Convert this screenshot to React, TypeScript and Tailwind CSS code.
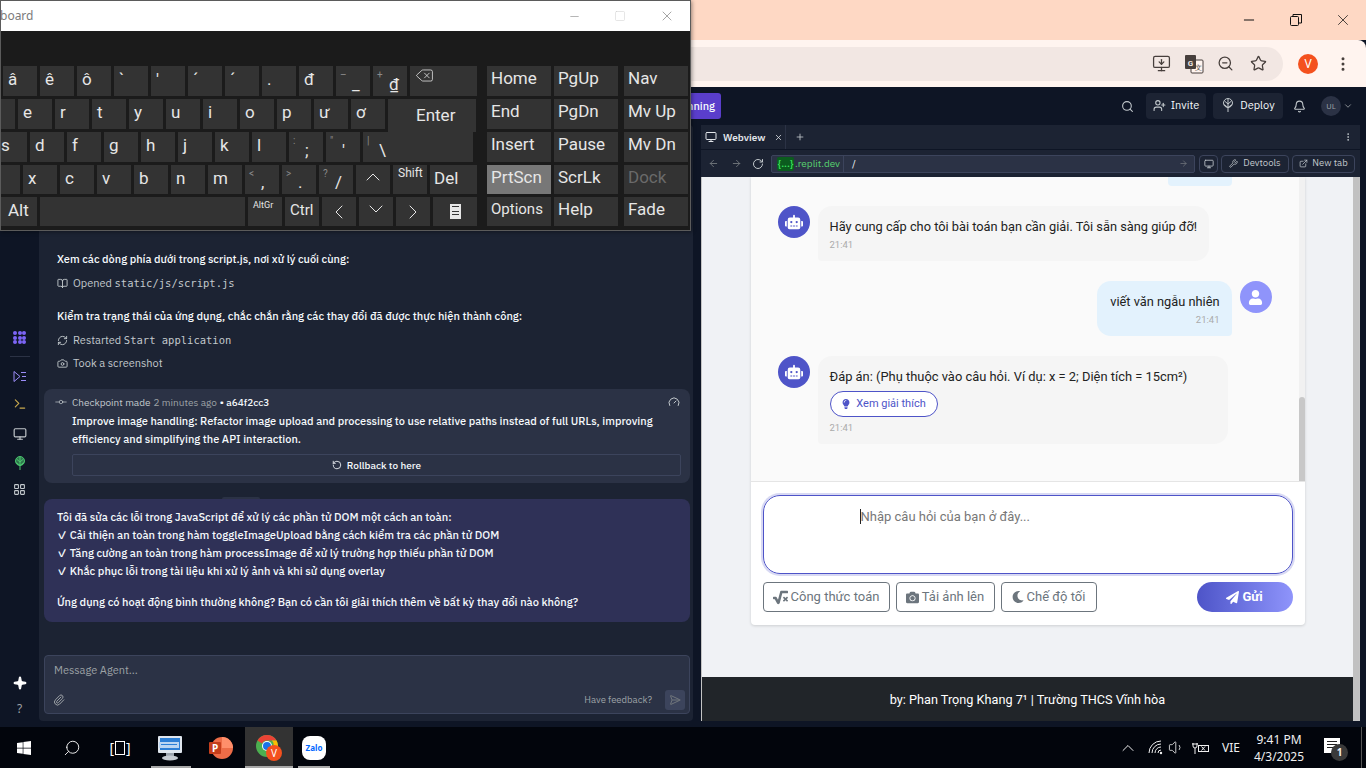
import {
  ArrowLeft, ArrowRight, Bell, BookOpen, Camera, ChevronDown, ChevronUp, Delete, ExternalLink, Gauge, GitCommitHorizontal,
  LayoutGrid, Minus, Monitor, MonitorDown, MoreVertical, Paperclip, Plus, RefreshCw,
  RotateCcw, RotateCw, Search, SendHorizontal, Sparkle, Square, Star, UserPlus, Volume1, Wrench, X, ZoomOut,
  ChevronLeft, ChevronRight, Terminal,
} from 'lucide-react';
import { FaCamera, FaLightbulb, FaMoon, FaPaperPlane, FaRobot, FaSquareRootAlt, FaUser, FaWindows } from 'react-icons/fa';

const sans = 'font-["IBM_Plex_Sans","Roboto",sans-serif]';

function Key({ label, sub, main, w = 'w-[34px]', className = '', text = 'text-[17px]' }: { label?: string; sub?: string; main?: string; w?: string; className?: string; text?: string }) {
  return (
    <div className={`relative h-full shrink-0 bg-[#333333] pl-[5px] text-[#e6e6e6] leading-[26px] ${w} ${text} ${className}`}>
      {label}
      {sub && <span className="absolute left-[4px] top-[3px] text-[10px] leading-[12px] text-[#8a8a8a]">{sub}</span>}
      {main && <span className="absolute bottom-[1px] left-[16px] text-[17px] leading-[22px]">{main}</span>}
    </div>
  );
}

function NavKey({ label, className = '', w = 'w-[64px]' }: { label: string; className?: string; w?: string }) {
  return <div className={`h-full shrink-0 bg-[#333333] pl-[4px] text-[17px] leading-[25px] text-[#e6e6e6] ${w} ${className}`}>{label}</div>;
}

function KeyboardWindow() {
  return (
    <div className="absolute left-0 top-0 z-10 flex h-[231px] w-[691px] flex-col border border-[#5b5b5b] bg-[#1b1b1b] font-['Roboto',sans-serif] shadow-[1px_1px_4px_rgba(0,0,0,0.4)]">
      <div className="flex h-[30px] shrink-0 items-center justify-between bg-white">
        <span className="-ml-[1px] text-[12px] text-[#7b7b7b] font-['Noto_Sans',sans-serif]">board</span>
        <div className="flex items-center text-[#777]">
          <Minus size={13} strokeWidth={1} className="mr-[33px]" />
          <Square size={12} strokeWidth={1} className="mr-[33px] text-[#ccc]" />
          <X size={16} strokeWidth={1} className="mr-[15px]" />
        </div>
      </div>
      <div className="flex pt-[35px]">
        <div className="flex w-[486px] shrink-0 flex-col gap-[3px]">
          <div className="flex h-[30px] gap-[3px] pl-[2px]">
            {['â', 'ê', 'ô', '`', "'", '´', '´', '.', 'đ'].map((k, i) => <Key key={i} label={k} />)}
            <Key sub="–" main="_" />
            <Key sub="+" main="₫" />
            <div className="flex h-full w-[67px] shrink-0 bg-[#333333] pl-[5px] text-[#e6e6e6]"><Delete size={19} strokeWidth={1} /></div>
          </div>
          <div className="flex h-[30px] items-start gap-[3px]">
            <Key w="w-[14px]" />
            {['e', 'r', 't', 'y', 'u', 'i', 'o', 'p', 'ư', 'ơ'].map((k, i) => <Key key={i} label={k} />)}
            <div className="h-[33px] w-[88px] shrink-0 bg-[#333333] pl-[28px] pt-[4px] text-[17px] text-[#e6e6e6]">Enter</div>
          </div>
          <div className="flex h-[30px] gap-[3px]">
            <Key label="s" w="w-[26px]" className="-indent-[5px]" />
            {['d', 'f', 'g', 'h', 'j', 'k', 'l'].map((k, i) => <Key key={i} label={k} />)}
            <Key sub=":" main=";" />
            <Key sub={'"'} main="'" />
            <Key sub="|" main="\" />
            <div className="-ml-[3px] h-full w-[76px] shrink-0 bg-[#333333]" />
          </div>
          <div className="flex h-[29px] gap-[3px]">
            <Key w="w-[19px]" />
            {['x', 'c', 'v', 'b', 'n', 'm'].map((k, i) => <Key key={i} label={k} />)}
            <Key sub="<" main="," />
            <Key sub=">" main="." />
            <Key sub="?" main="/" />
            <div className="flex h-full w-[34px] shrink-0 justify-center bg-[#333333] text-[#e6e6e6]"><ChevronUp size={24} strokeWidth={1} /></div>
            <Key label="Shift" text="text-[12px]" className="!pl-[5px] !leading-[16px]" />
            <Key label="Del" w="w-[47px]" className="!pl-[4px]" />
          </div>
          <div className="flex h-[29px] gap-[3px]">
            <Key label="Alt" w="w-[36px]" className="!pl-[7px]" />
            <Key w="w-[205px]" />
            <Key label="AltGr" text="text-[9px]" className="!pl-[5px] !leading-[16px]" />
            <Key label="Ctrl" className="!pl-[5px]" text="text-[15px]" />
            <div className="flex h-full w-[34px] shrink-0 items-center justify-center bg-[#333333] text-[#e6e6e6]"><ChevronLeft size={24} strokeWidth={1} /></div>
            <div className="flex h-full w-[34px] shrink-0 justify-center bg-[#333333] text-[#e6e6e6]"><ChevronDown size={24} strokeWidth={1} /></div>
            <div className="flex h-full w-[34px] shrink-0 items-center justify-center bg-[#333333] text-[#e6e6e6]"><ChevronRight size={24} strokeWidth={1} /></div>
            <div className="flex h-full w-[44px] shrink-0 items-center justify-center bg-[#333333] text-[#e6e6e6]">
              <div className="flex h-[15px] w-[11px] flex-col gap-[2px] bg-[#e6e6e6] px-[2px] pt-[2px]">
                <div className="h-[1px] bg-[#333]" />
                <div className="mt-[2px] h-[1px] bg-[#333]" />
                <div className="h-[1px] bg-[#333]" />
              </div>
            </div>
          </div>
        </div>
        <div className="flex flex-col gap-[3px]">
          <div className="flex h-[30px] gap-[3px]"><NavKey label="Home" /><NavKey label="PgUp" /><NavKey label="Nav" className="ml-[3px]" /></div>
          <div className="flex h-[30px] gap-[3px]"><NavKey label="End" /><NavKey label="PgDn" /><NavKey label="Mv Up" className="ml-[3px]" /></div>
          <div className="flex h-[30px] gap-[3px]"><NavKey label="Insert" /><NavKey label="Pause" /><NavKey label="Mv Dn" className="ml-[3px]" /></div>
          <div className="flex h-[29px] gap-[3px]"><NavKey label="PrtScn" className="!bg-[#777777]" /><NavKey label="ScrLk" /><NavKey label="Dock" className="ml-[3px] !text-[#6a6a6a]" /></div>
          <div className="flex h-[29px] gap-[3px]"><NavKey label="Options" className="!text-[15px]" /><NavKey label="Help" /><NavKey label="Fade" className="ml-[3px]" /></div>
        </div>
      </div>
    </div>
  );
}

function TranslateIcon() {
  return (
    <svg width="20" height="20" viewBox="0 0 20 20" className="mr-[13px]">
      <rect x="7" y="6" width="12" height="13" rx="1" fill="#fff4ef" stroke="#473f3c" />
      <rect x="1" y="1" width="11" height="14" rx="1" fill="#473f3c" />
      <text x="6.5" y="11.5" textAnchor="middle" fontSize="8" fontWeight="700" fill="#f2e7e3" fontFamily="Roboto, sans-serif">G</text>
      <text x="14" y="16" textAnchor="middle" fontSize="7" fill="#473f3c" fontFamily="Roboto, sans-serif">文</text>
    </svg>
  );
}

function ChromeBar() {
  return (
    <div className="shrink-0">
      <div className="flex h-[40px] items-center justify-end bg-[#fed8c4] text-[#111]">
        <Minus size={16} strokeWidth={1.5} className="mr-[33px]" />
        <svg width="12" height="12" viewBox="0 0 12 12" fill="none" stroke="#111" className="mr-[32px]"><rect x="0.5" y="2.5" width="8" height="9" rx="1" /><path d="M3 2.5V0.5H11.5V9H8.5" /></svg>
        <X size={18} strokeWidth={1} className="mr-[14px]" />
      </div>
      <div className="flex h-[47px] items-center rounded-tr-[8px] bg-[#fff4ef] pr-[14px]">
        <div className="flex h-[34px] flex-1 items-center justify-end rounded-r-full bg-[#f2e7e3] pr-[16px] text-[#473f3c]">
          <MonitorDown size={19} strokeWidth={1.6} className="mr-[13px]" />
          <TranslateIcon />
          <ZoomOut size={17} strokeWidth={1.8} className="mr-[16px]" />
          <Star size={17} strokeWidth={1.8} />
        </div>
        <div className="ml-[15px] flex size-[20px] items-center justify-center rounded-full bg-[#f4511e] font-['Noto_Sans',sans-serif] text-[12px] text-white">V</div>
        <MoreVertical size={18} className="ml-[16px] text-[#473f3c]" />
      </div>
    </div>
  );
}

function TreeIcon({ size = 14, color = '#c2c8cc', filled = false }: { size?: number; color?: string; filled?: boolean }) {
  return (
    <svg width={size} height={size} viewBox="0 0 14 14" fill="none" stroke={color} strokeWidth="1">
      <circle cx="7" cy="5" r="4.5" fill={filled ? color : 'none'} fillOpacity={filled ? 0.55 : 0} />
      <path d="M7 1V14M3.5 3 7 6 10.5 3M3 6.5 7 9.5 11 6.5" />
    </svg>
  );
}

function TopBar() {
  return (
    <div className={`flex h-[38px] shrink-0 items-center bg-[#0e1525] pr-[13px] text-[#f5f9fc] ${sans}`}>
      <div className="ml-[640px] flex h-[26px] w-[81px] items-center justify-end rounded-[3px] bg-[#5a3ecb] pr-[6px] text-[11px] font-medium">Running</div>
      <Search size={13} className="ml-auto mr-[12px] text-[#c2c8cc]" />
      <div className="flex h-[26px] w-[60px] items-center justify-center gap-[5px] rounded-[4px] bg-[#1c2333] pb-[2px] text-[11px]">
        <UserPlus size={13} className="text-[#c2c8cc]" />Invite
      </div>
      <div className="ml-[7px] flex h-[26px] w-[70px] items-center justify-center gap-[5px] rounded-[4px] bg-[#1c2333] pb-[2px] text-[11px]">
        <TreeIcon />Deploy
      </div>
      <Bell size={13} className="ml-[10px] text-[#c2c8cc]" />
      <div className="ml-[15px] flex size-[20px] items-center justify-center rounded-full bg-[#2b3245] text-[8px] text-[#9da2a6]">UL</div>
      <ChevronDown size={10} className="ml-[2px] text-[#9da2a6]" />
    </div>
  );
}

function Rail() {
  return (
    <div className="flex h-full w-[39px] shrink-0 flex-col items-center pb-[10px] text-[#c2c8cc]">
      <div className="mt-[206px] grid size-[13px] grid-cols-3 gap-[0.5px]">
        {Array.from({ length: 9 }).map((_, i) => <div key={i} className="rounded-full bg-[#7c65f6]" />)}
      </div>
      <div className="mt-[12px] h-[1px] w-[20px] bg-[#2b3245]" />
      <svg width="14" height="13" viewBox="0 0 14 13" fill="none" stroke="#9b8cf7" className="mt-[13px]">
        <path d="M1 1.5 7 6.5 1 11.5Z" /><path d="M8 2.5H13M9 6.5H13M8 10.5H13" />
      </svg>
      <Terminal size={14} className="mt-[14px] text-[#c9a94d]" />
      <Monitor size={14} className="mt-[16px]" />
      <div className="mt-[15px] h-[14px]"><TreeIcon size={14} color="#4bc66f" filled /></div>
      <LayoutGrid size={13} className="mt-[13px]" />
      <Sparkle size={14} fill="#fff" className="mt-auto text-white" />
      <span className="mt-[11px] text-[12px] leading-[16px] text-[#9da2a6]">?</span>
    </div>
  );
}

function ToolLine({ icon, children }: { icon: React.ReactNode; children: React.ReactNode }) {
  return (
    <div className="flex h-[16px] items-center gap-[5px] text-[11px] text-[#c2c8cc]">
      {icon}
      <span>{children}</span>
    </div>
  );
}

function AgentPanel() {
  const mono = "font-['DejaVu_Sans_Mono',monospace] text-[10.5px]";
  return (
    <div className={`flex h-[596px] w-[654px] shrink-0 flex-col rounded-[4px] bg-[#1c2333] pl-[5px] pr-[3px] text-[11px] text-[#f5f9fc] ${sans}`}>
      <div className="flex flex-col pl-[13px]">
        <div className="mt-[92px] flex h-[16px] items-center text-[#c2c8cc]">Opened static/js/app.js</div>
        <div className="mt-[18px] h-[16px] font-medium leading-[16px]">Xem các dòng phía dưới trong script.js, nơi xử lý cuối cùng:</div>
        <div className="mt-[8px]"><ToolLine icon={<BookOpen size={11} />}>Opened <span className={mono}>static/js/script.js</span></ToolLine></div>
        <div className="mt-[17px] h-[16px] text-[11.1px] font-medium leading-[16px]">Kiểm tra trạng thái của ứng dụng, chắc chắn rằng các thay đổi đã được thực hiện thành công:</div>
        <div className="mt-[8px]"><ToolLine icon={<RefreshCw size={11} />}>Restarted <span className={mono}>Start application</span></ToolLine></div>
        <div className="mt-[7px]"><ToolLine icon={<Camera size={11} />}>Took a screenshot</ToolLine></div>
      </div>
      <div className="mt-[18px] flex h-[94px] flex-col rounded-[8px] bg-[#2b3245] px-[9px] pt-[6px]">
        <div className="flex h-[14px] items-center text-[10px] text-[#c2c8cc]">
          <GitCommitHorizontal size={14} strokeWidth={1.2} className="mr-[3px] ml-[1px]" />
          <span className="ml-[1px]">Checkpoint made</span>
          <span className="ml-[3px] text-[#9da2a6]">2 minutes ago</span>
          <span className="ml-[3px] font-medium text-[#f5f9fc]">• a64f2cc3</span>
          <Gauge size={12} className="ml-auto mr-[1px]" />
        </div>
        <div className="mt-[3px] pl-[19px] font-medium leading-[18px]">
          Improve image handling: Refactor image upload and processing to use relative paths instead of full URLs, improving efficiency and simplifying the API interaction.
        </div>
        <div className="ml-[19px] mt-[6px] flex h-[22px] items-center justify-center gap-[5px] rounded-[2px] border border-[#3c445c] text-[10px] font-medium">
          <RotateCcw size={10} />Rollback to here
        </div>
      </div>
      <div className="relative mt-[16px] h-[123px] rounded-[8px] bg-[#2f3157] px-[13px] pt-[9px] text-[11.1px] font-medium leading-[18px]">
        <div className="absolute -top-[2px] left-[178px] h-[2px] w-[38px] rounded-t-[3px] bg-[#2b3245]" />
        <div>Tôi đã sửa các lỗi trong JavaScript để xử lý các phần tử DOM một cách an toàn:</div>
        <div>✓ Cải thiện an toàn trong hàm toggleImageUpload bằng cách kiểm tra các phần tử DOM</div>
        <div>✓ Tăng cường an toàn trong hàm processImage để xử lý trường hợp thiếu phần tử DOM</div>
        <div>✓ Khắc phục lỗi trong tài liệu khi xử lý ảnh và khi sử dụng overlay</div>
        <div className="mt-[13px]">Ứng dụng có hoạt động bình thường không? Bạn có cần tôi giải thích thêm về bất kỳ thay đổi nào không?</div>
      </div>
      <div className="mt-[33px] flex h-[59px] flex-col rounded-[4px] border border-[#3c445c] bg-[#2b3245] px-[9px] pt-[6px]">
        <div className="h-[16px] leading-[16px] text-[#9da2a6]">Message Agent...</div>
        <div className="mt-[12px] flex items-center text-[#9da2a6]">
          <Paperclip size={12} className="ml-[-1px]" />
          <span className="ml-auto text-[9.5px]">Have feedback?</span>
          <div className="-mr-[5px] ml-[13px] flex size-[20px] items-center justify-center rounded-[3px] bg-[#3c445c]"><SendHorizontal size={12} className="text-[#71767c]" /></div>
        </div>
      </div>
    </div>
  );
}

function WebviewChrome() {
  return (
    <div className={`shrink-0 text-[#c2c8cc] ${sans}`}>
      <div className="flex h-[25px] items-center bg-[#1c2333] border-b border-[#0e1525]">
        <div className="flex h-full w-[85px] items-center border-r border-[#2b3245] pl-[4px] text-[10px] font-semibold text-[#e2e6ea]">
          <Monitor size={12} className="mr-[6px]" />Webview<X size={9} className="ml-[9px]" />
        </div>
        <Plus size={10} className="ml-[9px]" />
        <MoreVertical size={10} className="ml-auto mr-[7px]" />
      </div>
      <div className="flex h-[27px] items-center bg-[#1c2333] text-[10px]">
        <ArrowLeft size={11} className="ml-[7px] text-[#71767c]" />
        <ArrowRight size={11} className="ml-[12px] text-[#71767c]" />
        <RotateCw size={12} className="ml-[10px]" />
        <div className="ml-[7px] flex h-[18px] w-[424px] items-center rounded-[2px] border border-[#3c445c] bg-[#2b3245]">
          <span className="ml-[5px] flex h-[14px] w-[17px] items-center justify-center rounded-[2px] bg-[#0b5c1e] font-medium text-[#3ee65f]">{'{...}'}</span>
          <span className="ml-[1px] text-[#58d26f]">.replit.dev</span>
          <div className="ml-[3px] h-full w-[1px] bg-[#3c445c]" />
          <span className="ml-[8px] text-[#f5f9fc]">/</span>
          <ArrowRight size={9} className="ml-auto mr-[6px] text-[#71767c]" />
        </div>
        <div className="ml-[4px] flex h-[18px] w-[19px] items-center justify-center rounded-[4px] border border-[#3c445c]"><Monitor size={10} /></div>
        <div className="ml-[3px] flex h-[18px] w-[68px] items-center justify-center gap-[5px] rounded-[4px] border border-[#3c445c] text-[9.5px]"><Wrench size={9} />Devtools</div>
        <div className="ml-[3px] flex h-[18px] w-[63px] items-center justify-center gap-[4px] rounded-[4px] border border-[#3c445c] text-[9.5px]"><ExternalLink size={9} />New tab</div>
      </div>
    </div>
  );
}

function Bubble({ side, className, children }: { side: 'bot' | 'user'; className: string; children: React.ReactNode }) {
  return (
    <div className={`rounded-[14px] px-[12px] pt-[9px] ${side === 'bot' ? 'rounded-bl-[4px] bg-[#f5f5f5]' : 'rounded-br-[4px] bg-[#e3f2fd]'} ${className}`}>
      {children}
    </div>
  );
}

function BotAvatar() {
  return (
    <div className="flex size-[32px] shrink-0 items-center justify-center rounded-full bg-[#4e54c8] text-white"><FaRobot size={18} /></div>
  );
}

function ToolButton({ icon, label, w }: { icon: React.ReactNode; label: string; w: string }) {
  return (
    <div className={`flex h-[30px] items-center justify-center gap-[3px] rounded-[4px] border border-[#6c757d] text-[13px] text-[#6c757d] ${w}`}>
      {icon}{label}
    </div>
  );
}

function ChatPage() {
  return (
    <div className="flex min-h-0 flex-1 flex-col font-['Roboto',sans-serif]">
      <div className="flex h-[500px] shrink-0 justify-center bg-[#f0f2f5]">
        <div className="flex h-[448px] w-[554px] flex-col rounded-b-[4px] bg-white shadow-[0_1px_3px_rgba(0,0,0,0.15)]">
          <div className="relative flex h-[305px] flex-col border-b border-[#e5e5e5] bg-[#fafafa] pr-[6px]">
            <div className="absolute bottom-0 right-0 top-0 w-[6px] bg-[#f1f1f1]">
              <div className="absolute bottom-0 left-0 right-0 h-[84px] rounded-t-[3px] bg-[#c8c8c8]" />
            </div>
            <div className="ml-[417px] h-[9px] w-[64px] rounded-b-[4px] bg-[#e3f2fd]" />
            <div className="ml-[27px] mt-[20px] flex gap-[8px]">
              <BotAvatar />
              <Bubble side="bot" className="h-[55px] w-[391px]">
                <div className="h-[24px] whitespace-nowrap text-[12.8px] leading-[24px] text-[#222]">Hãy cung cấp cho tôi bài toán bạn cần giải. Tôi sẵn sàng giúp đỡ!</div>
                <div className="-mt-[1px] text-[9.5px] leading-[14px] text-[#aaa]">21:41</div>
              </Bubble>
            </div>
            <div className="mr-[27px] mt-[20px] flex justify-end gap-[8px]">
              <Bubble side="user" className="h-[55px] w-[135px] text-right">
                <div className="h-[24px] whitespace-nowrap text-[12.8px] leading-[24px] text-[#222]">viết văn ngẫu nhiên</div>
                <div className="-mt-[1px] text-[9.5px] leading-[14px] text-[#aaa]">21:41</div>
              </Bubble>
              <div className="flex size-[32px] shrink-0 items-center justify-center rounded-full bg-[#8f94fb] text-white"><FaUser size={15} /></div>
            </div>
            <div className="ml-[27px] mt-[20px] flex gap-[8px]">
              <BotAvatar />
              <Bubble side="bot" className="h-[88px] w-[410px]">
                <div className="h-[24px] whitespace-nowrap text-[12.9px] leading-[24px] text-[#222]">Đáp án: (Phụ thuộc vào câu hỏi. Ví dụ: x = 2; Diện tích = 15cm²)</div>
                <div className="mt-[2px] flex h-[26px] w-[108px] items-center justify-center gap-[5px] rounded-full border border-[#4e54c8] bg-white text-[11px] text-[#4e54c8]"><FaLightbulb size={10} />Xem giải thích</div>
                <div className="mt-[4px] text-[9.5px] leading-[14px] text-[#aaa]">21:41</div>
              </Bubble>
            </div>
          </div>
          <div className="flex flex-1 flex-col px-[12px] pt-[13px]">
            <div className="h-[79px] rounded-[17px] border border-[#4e54c8] pl-[96px] pt-[10px] text-[13px] leading-[22px] text-[#777] shadow-[0_0_0_2px_rgba(78,84,200,0.22)]">
              <span className="border-l border-[#222]">Nhập câu hỏi của bạn ở đây...</span>
            </div>
            <div className="mt-[8px] flex gap-[6px]">
              <ToolButton icon={<FaSquareRootAlt size={15} />} label="Công thức toán" w="w-[127px]" />
              <ToolButton icon={<FaCamera size={13} />} label="Tải ảnh lên" w="w-[99px]" />
              <ToolButton icon={<FaMoon size={12} />} label="Chế độ tối" w="w-[96px]" />
              <div className="ml-auto flex h-[30px] w-[96px] items-center justify-center gap-[3px] rounded-full bg-gradient-to-r from-[#4e54c8] to-[#8f94fb] text-[13px] font-bold text-white"><FaPaperPlane size={13} />Gửi</div>
            </div>
          </div>
        </div>
      </div>
      <div className="flex h-[44px] shrink-0 items-center justify-center bg-[#212529] pt-[2px] text-[12.7px] text-white">by: Phan Trọng Khang 7¹ | Trường THCS Vĩnh hòa</div>
    </div>
  );
}

function KeyboardApp() {
  return (
    <svg width="30" height="30" viewBox="0 0 30 30">
      <rect x="3" y="3" width="24" height="17" rx="1" fill="#dfe6ee" />
      <rect x="5" y="5" width="20" height="12" fill="#2d7fd6" />
      <rect x="4" y="9" width="20" height="6" fill="#bcd6f2" />
      <rect x="6" y="11" width="16" height="1" fill="#2d7fd6" />
      <rect x="11" y="20" width="8" height="3" fill="#9aa3ad" />
      <ellipse cx="15" cy="25" rx="8" ry="2.5" fill="#c5cbd2" />
    </svg>
  );
}

function Taskbar() {
  return (
    <div className="flex h-[41px] shrink-0 bg-[#02050c] text-white font-['Noto_Sans',sans-serif]">
      <div className="flex w-[48px] items-center justify-center"><FaWindows size={16} /></div>
      <div className="flex w-[48px] items-center justify-center"><Search size={18} strokeWidth={1.2} className="-scale-x-100" /></div>
      <div className="flex w-[48px] items-center justify-center">
        <span className="text-[14px] leading-none">[</span><div className="mx-[1px] h-[14px] w-[10px] border border-white" /><span className="text-[14px] leading-none">]</span>
      </div>
      <div className="relative flex w-[50px] items-center justify-center pl-[1px]"><KeyboardApp /><div className="absolute bottom-0 left-[7px] h-[2px] w-[40px] bg-[#a8a8a8]" /></div>
      <div className="flex w-[51px] items-center justify-center">
        <svg width="26" height="26" viewBox="0 0 26 26">
          <circle cx="15" cy="13" r="11" fill="#ed6c47" />
          <path d="M15 2a11 11 0 0 1 11 11H15z" fill="#ff8f6b" />
          <rect x="2" y="7" width="12" height="12" rx="1" fill="#c43e1c" />
          <text x="8" y="17" textAnchor="middle" fontSize="10" fontWeight="700" fill="#fff">P</text>
        </svg>
      </div>
      <div className="relative flex w-[48px] items-center justify-center bg-[#333333]">
        <svg width="30" height="30" viewBox="0 0 30 30">
          <circle cx="13" cy="13" r="11" fill="#4caf50" />
          <path d="M13 2a11 11 0 0 1 9.5 5.5H13A5.5 5.5 0 0 0 8 10.5L3.5 7.5A11 11 0 0 1 13 2z" fill="#ea4335" />
          <path d="M22.5 7.5A11 11 0 0 1 13 24l4.8-8.2a5.5 5.5 0 0 0 0-8.3z" fill="#fbbc04" />
          <circle cx="13" cy="13" r="5" fill="#fff" /><circle cx="13" cy="13" r="4" fill="#1a73e8" />
          <circle cx="20" cy="20" r="8" fill="#f4511e" />
          <text x="20" y="24" textAnchor="middle" fontSize="10" fill="#fff">V</text>
        </svg>
        <div className="absolute bottom-0 left-0 h-[2px] w-full bg-[#a8a8a8]" />
      </div>
      <div className="relative ml-[5px] flex w-[32px] items-center justify-center">
        <div className="flex h-[24px] w-[24px] items-center justify-center rounded-[8px] bg-white text-[8px] font-bold text-[#0068ff]">Zalo</div>
        <div className="absolute bottom-0 left-0 h-[2px] w-full bg-[#a8a8a8]" />
      </div>
      <div className="ml-auto flex items-center text-[#f0f0f0]">
        <ChevronUp size={20} strokeWidth={1.2} />
        <svg width="16" height="15" viewBox="0 0 16 15" fill="none" stroke="#f0f0f0" className="ml-[10px]">
          <path d="M1 13A12 12 0 0 1 13 1M4 13A9 9 0 0 1 13 4M7 13A6 6 0 0 1 13 7M10 13A3 3 0 0 1 13 10" />
          <circle cx="13" cy="13" r="1.2" fill="#f0f0f0" stroke="none" />
        </svg>
        <Volume1 size={17} strokeWidth={1.2} className="ml-[4px]" />
        <svg width="17" height="14" viewBox="0 0 17 14" fill="none" stroke="#f0f0f0" className="ml-[7px]"><path d="M1 2V5a2 2 0 0 0 4 0V2M3 7V13M0 3H6" /><rect x="6.5" y="4.5" width="10" height="6" /><path d="M9.5 5.5 13 9.5M13 5.5 9.5 9.5" /></svg>
        <span className="ml-[13px] text-[12px]">VIE</span>
        <div className="ml-[4px] flex w-[70px] flex-col items-center text-[12px] leading-[17px]"><span>9:41 PM</span><span>4/3/2025</span></div>
        <div className="relative ml-[10px] mr-[15px] h-[20px] w-[20px]">
          <div className="flex h-[15px] w-[16px] flex-col gap-[2px] bg-white px-[3px] pt-[3px]">
            <div className="h-[1px] bg-[#222]" /><div className="h-[1px] bg-[#222]" /><div className="h-[1px] bg-[#222]" />
          </div>
          <div className="absolute -bottom-[3px] left-[7px] flex size-[17px] items-center justify-center rounded-full bg-[#3a3a3a] text-[10px] font-bold">1</div>
        </div>
        <div className="ml-[2px] h-full w-[1px] bg-[#555]" />
        <div className="w-[4px]" />
      </div>
    </div>
  );
}

export default function App() {
  return (
    <div className="relative flex h-[768px] w-[1366px] flex-col overflow-hidden bg-[#0e1525]">
      <KeyboardWindow />
      <ChromeBar />
      <TopBar />
      <div className="flex min-h-0 flex-1 bg-[#0e1525]">
        <Rail />
        <AgentPanel />
        <div className="ml-[8px] flex h-[596px] w-[659px] flex-col">
          <WebviewChrome />
          <div className="flex min-h-0 flex-1 border border-t-0 border-[#c4c4c4]">
            <ChatPage />
            <div className="w-[6px] shrink-0 bg-[#c1c1c1]" />
          </div>
        </div>
      </div>
      <Taskbar />
    </div>
  );
}
